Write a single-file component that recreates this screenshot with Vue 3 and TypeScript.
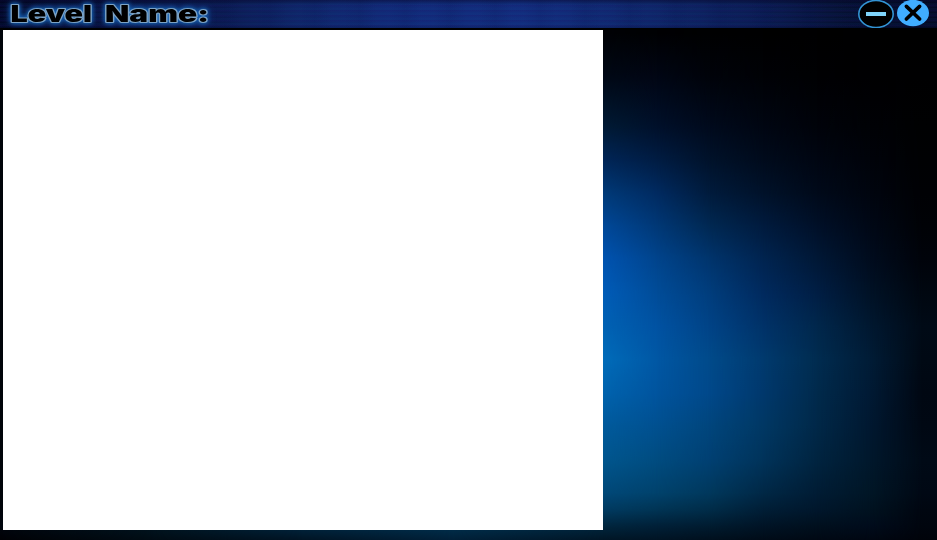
<script setup lang="ts">
interface GlowColumn {
  x: number
  colors: string[]
}

// Vertical colour samples shared by every column of the backdrop glow.
const rows = [33, 76, 126, 159, 193, 226, 259, 293, 326, 359, 393, 426, 460, 493, 510, 526, 540]
const frame = (color: string, last: string): string[] => [...Array(15).fill('#00040a'), color, last]

const columns: GlowColumn[] = [
  { x: 0, colors: frame('#00060e', '#000206') },
  { x: 150, colors: frame('#001420', '#000c14') },
  { x: 300, colors: frame('#002640', '#001424') },
  { x: 450, colors: frame('#00304e', '#002038') },
  { x: 603, colors: ['#000205', '#000815', '#001a34', '#002556', '#003a78', '#004898', '#0053b0', '#005cb8', '#0062b4', '#006cba', '#0063ae', '#005a9c', '#00568e', '#004878', '#003a60', '#00263e', '#001626'] },
  { x: 657, colors: ['#000103', '#010614', '#00102a', '#001c42', '#002a60', '#003876', '#00448c', '#004c98', '#0052a2', '#0057a4', '#00549e', '#005090', '#004c80', '#00426c', '#003454', '#002038', '#001424'] },
  { x: 710, colors: ['#000102', '#00030a', '#000a1c', '#00122a', '#001b3c', '#002852', '#00346c', '#003d7c', '#004386', '#004a8a', '#00488a', '#00457c', '#004072', '#00385c', '#002c48', '#001c30', '#00101e'] },
  { x: 763, colors: ['#000001', '#000206', '#000612', '#000b1c', '#00122a', '#001b3e', '#002450', '#002a5e', '#003268', '#003a6e', '#00386c', '#003864', '#00335a', '#002846', '#001e36', '#001426', '#000c18'] },
  { x: 817, colors: ['#000001', '#000103', '#00030a', '#000612', '#000a1a', '#001028', '#001836', '#001e44', '#00274c', '#002c50', '#002a4c', '#002848', '#002440', '#001c34', '#00172c', '#00101e', '#000914'] },
  { x: 870, colors: ['#000001', '#000002', '#000206', '#00030a', '#00050f', '#000816', '#000c1e', '#001226', '#001830', '#001c36', '#001a34', '#001830', '#00182c', '#001626', '#001220', '#000c1c', '#000712'] },
  { x: 923, colors: ['#000000', '#000001', '#000102', '#000103', '#000104', '#000206', '#00030a', '#000710', '#000a16', '#000914', '#000712', '#000813', '#000a16', '#000814', '#000610', '#00050e', '#00030a'] },
]

const layers = columns.map((column, i) => {
  const stops = column.colors.map((color, r) => `${color} ${rows[r]}px`).join(', ')
  const mask = i === 0 ? 'none' : `linear-gradient(90deg, transparent ${columns[i - 1].x}px, #000 ${column.x}px)`
  return { backgroundImage: `linear-gradient(180deg, ${stops})`, maskImage: mask }
})
</script>

<template>
  <div class="window">
    <div v-for="(layer, i) in layers" :key="i" class="glow" :style="layer"></div>
    <div class="content">
      <header class="titlebar">
        <svg class="title" width="230" height="28" viewBox="0 0 230 28">
          <g class="title-text">
            <text x="10.5" y="21.8" textLength="81.5" lengthAdjust="spacingAndGlyphs">Level</text>
            <text x="105" y="21.8" textLength="104" lengthAdjust="spacingAndGlyphs">Name:</text>
          </g>
        </svg>
        <div class="controls">
          <button class="control" aria-label="Minimize">
            <svg width="37" height="28" viewBox="0 0 37 28">
              <ellipse cx="18" cy="14" rx="17.2" ry="13.5" fill="#000" stroke="#3293d3" stroke-width="1.6" />
              <rect x="8" y="12" width="20" height="4" fill="#7fd4fa" />
            </svg>
          </button>
          <button class="control" aria-label="Close">
            <svg width="32" height="28" viewBox="0 0 32 28">
              <ellipse cx="16" cy="13" rx="16" ry="13.2" fill="#40adff" />
              <path d="M9.4 6.4 22.6 19M22.6 6.4 9.4 19" stroke="#000" stroke-width="3.7" stroke-linecap="round" />
            </svg>
          </button>
        </div>
      </header>
      <main class="stage"></main>
    </div>
  </div>
</template>

<style>
body {
  margin: 0;
  background: #000;
}
</style>

<style scoped>
.window {
  display: grid;
  width: 937px;
  height: 540px;
  overflow: hidden;
}
.glow,
.content {
  grid-area: 1 / 1;
}
.content {
  z-index: 1;
}
.titlebar {
  display: flex;
  justify-content: space-between;
  height: 28px;
  border-bottom: 2px solid #000;
  background:
    linear-gradient(180deg, rgba(0, 0, 20, 0.35), transparent 5px, transparent 25px, rgba(0, 5, 30, 0.2)),
    repeating-linear-gradient(180deg, rgba(30, 20, 110, 0.22) 0 1px, transparent 2px 3px, rgba(20, 65, 145, 0.18) 4px, transparent 5px),
    repeating-linear-gradient(90deg, rgba(0, 12, 65, 0.12) 0, transparent 17px, transparent 28px, rgba(0, 12, 65, 0.12) 45px),
    linear-gradient(90deg, #020722 0, #061039 110px, #0a1b50 220px, #0e2768 300px, #112c7a 400px, #122e7e 535px, #0e2769 650px, #0a1c51 760px, #05102f 850px, #030a22 937px);
}
.title-text {
  font-family: Inter, "DejaVu Sans", sans-serif;
  font-size: 22.5px;
  font-weight: 900;
  fill: #000;
  stroke: #7da3c5;
  stroke-width: 2px;
  stroke-linejoin: round;
  paint-order: stroke;
  filter: drop-shadow(0 0 2px #1769bd) drop-shadow(0 0 3px #124c98);
}
.controls {
  display: flex;
  gap: 2px;
  padding-right: 8px;
}
.control {
  display: block;
  padding: 0;
  border: 0;
  background: none;
}
.control svg {
  display: block;
}
.stage {
  width: 600px;
  height: 500px;
  margin-left: 3px;
  background: #fff;
}
</style>
